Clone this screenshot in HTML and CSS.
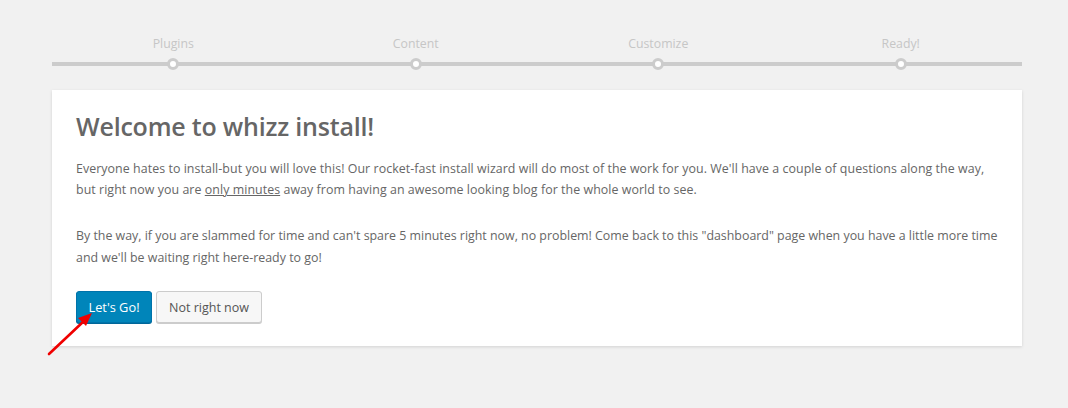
FILE: index.html
```html
<!DOCTYPE html>
<html>
<head>
<meta charset="utf-8">
<link rel="stylesheet" href="styles.css">
</head>
<body>
<div class="wrap">
  <ol class="steps">
    <li class="step"><span class="label">Plugins</span><span class="dot"></span></li>
    <li class="step"><span class="label">Content</span><span class="dot"></span></li>
    <li class="step"><span class="label">Customize</span><span class="dot"></span></li>
    <li class="step"><span class="label">Ready!</span><span class="dot"></span></li>
  </ol>
  <div class="card">
    <h1 class="title">Welcome to whizz install!</h1>
    <p class="text">Everyone hates to install-but you will love this! Our rocket-fast install wizard will do most of the work for you. We'll have a couple of questions along the way,<br>but right now you are <u>only minutes</u> away from having an awesome looking blog for the whole world to see.</p>
    <p class="text text-second">By the way, if you are slammed for time and can't spare 5 minutes right now, no problem! Come back to this "dashboard" page when you have a little more time<br>and we'll be waiting right here-ready to go!</p>
    <div class="actions">
      <button class="btn btn-primary">Let's Go!</button>
      <button class="btn btn-secondary">Not right now</button>
    </div>
  </div>
</div>
<svg class="arrow" width="60" height="60" viewBox="0 0 60 60">
  <line x1="4" y1="50" x2="39" y2="17" stroke="#f00000" stroke-width="2.6" stroke-linecap="round"/>
  <polygon points="47,9 33,14 41,22" fill="#f00000"/>
</svg>
</body>
</html>
```
FILE: styles.css
```css
html, body {
  margin: 0;
  padding: 0;
  background: #f1f1f1;
}
body {
  font-family: "Open Sans", "Noto Sans", sans-serif;
  color: #666;
  position: relative;
  width: 1068px;
  height: 408px;
  overflow: hidden;
}
.wrap {
  width: 970px;
  margin-left: 52px;
  padding-top: 35px;
}
.steps {
  list-style: none;
  margin: 0;
  padding: 0;
  display: grid;
  grid-template-columns: repeat(4, 1fr);
  border-bottom: 4px solid #ccc;
  height: 27px;
}
.step {
  display: flex;
  flex-direction: column;
  align-items: center;
  position: relative;
}
.label {
  font-size: 12.3px;
  color: #c6c6c6;
  line-height: 17px;
}
.dot {
  position: absolute;
  top: 23px;
  left: 50%;
  margin-left: -6px;
  width: 6px;
  height: 6px;
  border-radius: 50%;
  background: #fff;
  border: 3px solid #ccc;
}
.card {
  margin-top: 24px;
  background: #fff;
  box-shadow: 0 1px 3px rgba(0,0,0,0.13);
  padding: 19px 24px 23px 24px;
}
.title {
  margin: 0;
  font-size: 25px;
  font-weight: 600;
  color: #666;
  line-height: 34px;
  letter-spacing: -0.2px;
}
.text {
  margin: 0;
  font-size: 12.4px;
  line-height: 21px;
  color: #666;
  white-space: nowrap;
  letter-spacing: 0.06px;
}
.text-second {
  letter-spacing: 0;
  line-height: 22px;
}
.title + .text {
  margin-top: 15px;
}
.text + .text {
  margin-top: 25px;
}
.text u {
  text-decoration-color: #666;
}
.actions {
  display: flex;
  gap: 4px;
  margin-top: 22px;
}
.btn {
  font-family: "Open Sans", "Noto Sans", sans-serif;
  font-size: 12.5px;
  height: 32px;
  border-radius: 3px;
  padding: 0 10px;
  cursor: pointer;
}
.btn-primary {
  background: #0085ba;
  border: 1px solid #0073aa;
  color: #fff;
  box-shadow: 0 1px 0 #006799;
  width: 76px;
  font-size: 12.8px;
}
.btn-secondary {
  background: #f7f7f7;
  border: 1px solid #ccc;
  color: #555;
  box-shadow: 0 1px 0 #ccc;
  width: 106px;
}
.arrow {
  position: absolute;
  left: 45px;
  top: 304px;
}
```
